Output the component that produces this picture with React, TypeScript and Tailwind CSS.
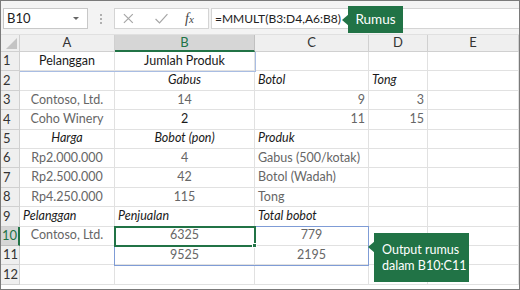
import React from "react";

type Cell = { t?: string; c?: string };
const G = "text-[#666666]";
const K = "text-[#1a1a1a]";

const data: Cell[][] = [
  [{ t: "Pelanggan", c: `justify-center ${K}` }, { t: "Jumlah Produk", c: `justify-center ${K}` }, {}, {}, {}],
  [{}, { t: "Gabus", c: `justify-center italic ${K}` }, { t: "Botol", c: `justify-start italic ${K}` }, { t: "Tong", c: `justify-start italic ${K}` }, {}],
  [{ t: "Contoso, Ltd.", c: `justify-center ${G}` }, { t: "14", c: `justify-center ${G}` }, { t: "9", c: `justify-end ${G}` }, { t: "3", c: `justify-end ${G}` }, {}],
  [{ t: "Coho Winery", c: `justify-center ${G}` }, { t: "2", c: `justify-center ${K}` }, { t: "11", c: `justify-end ${G}` }, { t: "15", c: `justify-end ${G}` }, {}],
  [{ t: "Harga", c: `justify-center italic ${K}` }, { t: "Bobot (pon)", c: `justify-center italic ${K}` }, { t: "Produk", c: `justify-start italic ${K}` }, {}, {}],
  [{ t: "Rp2.000.000", c: `justify-center ${G}` }, { t: "4", c: `justify-center ${G}` }, { t: "Gabus (500/kotak)", c: `justify-start ${G}` }, {}, {}],
  [{ t: "Rp2.500.000", c: `justify-center ${G}` }, { t: "42", c: `justify-center ${G}` }, { t: "Botol (Wadah)", c: `justify-start ${G}` }, {}, {}],
  [{ t: "Rp4.250.000", c: `justify-center ${G}` }, { t: "115", c: `justify-center ${G}` }, { t: "Tong", c: `justify-start ${G}` }, {}, {}],
  [{ t: "Pelanggan", c: `justify-start italic ${K}` }, { t: "Penjualan", c: `justify-start italic ${K}` }, { t: "Total bobot", c: `justify-start italic ${K}` }, {}, {}],
  [{ t: "Contoso, Ltd.", c: `justify-center ${G}` }, { t: "6325", c: `justify-center ${G}` }, { t: "779", c: `justify-center ${G}` }, {}, {}],
  [{}, { t: "9525", c: `justify-center ${G}` }, { t: "2195", c: `justify-center ${G}` }, {}, {}],
  [{}, {}, {}, {}, {}],
];

const cols = ["A", "B", "C", "D", "E"];

export default function App() {
  return (
    <div
      className="relative w-[520px] h-[290px] overflow-hidden bg-white border border-[#7a7a7a] flex flex-col"
      style={{ fontFamily: "Lato, 'Liberation Sans', sans-serif" }}
    >
      {/* formula bar */}
      <div className="h-[34px] shrink-0 bg-[#f3f3f3] border-b border-[#e0e0e0] flex items-start pt-[7px] pl-[2px]">
        <div className="w-[85px] h-[21px] bg-white border border-[#c8c8c8] flex items-center justify-between pl-[3px] pr-[8px]">
          <span className="text-[13px] text-[#222]">B10</span>
          <span className="w-0 h-0 border-l-[3px] border-r-[3px] border-t-[3px] border-l-transparent border-r-transparent border-t-[#666]" />
        </div>
        <div className="w-[26px] h-[21px] flex flex-col items-center justify-center gap-[2px]">
          <span className="w-[2px] h-[2px] bg-[#b0b0b0]" />
          <span className="w-[2px] h-[2px] bg-[#b0b0b0]" />
          <span className="w-[2px] h-[2px] bg-[#b0b0b0]" />
        </div>
        <div className="w-[95px] h-[21px] bg-white border border-[#d4d4d4] flex items-center">
          <svg width="94" height="19" viewBox="0 0 94 19">
            <path d="M9 5 L18 14 M18 5 L9 14" stroke="#a6a6a6" strokeWidth="1.2" fill="none" />
            <path d="M41 10 L45 14 L53 5" stroke="#a6a6a6" strokeWidth="1.2" fill="none" />
          </svg>
        </div>
        <div className="absolute left-[184px] top-[7px] h-[21px] flex items-center">
          <span className="text-[14px] italic text-[#444]" style={{ fontFamily: "'Liberation Serif', serif" }}>f<span className="text-[11px]">x</span></span>
        </div>
        <div className="flex-1 h-[21px] ml-[2px] bg-white border border-[#d4d4d4] border-r-0 flex items-center pl-[3px]">
          <span className="text-[12px] text-[#222] whitespace-nowrap">=MMULT(B3:D4,A6:B8)</span>
        </div>
      </div>

      {/* grid */}
      <div className="grid grid-cols-[19px_95px_140px_114px_59px_91px] grid-rows-[17px_repeat(12,19.4px)] text-[12.5px]">
        <div className="bg-[#efefef] border-r border-b border-[#d0d0d0] relative">
          <span className="absolute right-[2px] bottom-[2px] w-0 h-0 border-b-[11px] border-l-[11px] border-b-[#c4c4c4] border-l-transparent" />
        </div>
        {cols.map((c) =>
          c === "B" ? (
            <div key={c} className="bg-[#d6d6d6] border-r border-[#c0c0c0] border-b-2 border-b-[#217346] flex items-center justify-center text-[13px] text-[#217346]">
              {c}
            </div>
          ) : (
            <div key={c} className="bg-[#efefef] border-r border-b border-[#d0d0d0] flex items-center justify-center text-[13px] text-[#333]">
              {c}
            </div>
          )
        )}
        {data.map((row, ri) => (
          <React.Fragment key={ri}>
            {ri === 9 ? (
              <div className="bg-[#d6d6d6] border-r-2 border-r-[#217346] border-b border-b-[#c0c0c0] flex items-center pl-[1px] text-[13px] text-[#217346]">
                {ri + 1}
              </div>
            ) : (
              <div className="bg-[#efefef] border-r border-b border-[#d0d0d0] flex items-center pl-[2px] text-[13px] text-[#333]">
                {ri + 1}
              </div>
            )}
            {row.map((cell, ci) => (
              <div
                key={ci}
                className={`border-r border-b border-[#e1e1e1] flex items-center px-[3px] whitespace-nowrap overflow-visible ${cell.c ?? ""}`}
              >
                {cell.t}
              </div>
            ))}
          </React.Fragment>
        ))}
      </div>

      {/* row1 blue borders */}
      <div className="absolute left-[19px] top-[51px] w-[236px] h-[20px] border-b border-r border-[#a9bde3] pointer-events-none" />

      {/* range selection B10:C11 */}
      <div className="absolute left-[113px] top-[225px] w-[255px] h-[40px] border border-[#7f9cd6] pointer-events-none" />
      {/* active cell B10 */}
      <div className="absolute left-[113px] top-[225px] w-[142px] h-[21px] border-2 border-[#217346] pointer-events-none" />
      <div className="absolute left-[251px] top-[242px] w-[5px] h-[5px] bg-[#217346] border border-white" />

      {/* callout Rumus */}
      <div className="absolute left-[347px] top-[5px] w-[55px] h-[27px] bg-[#217346] flex items-center justify-center text-white text-[13.5px] whitespace-nowrap">
        Rumus
      </div>
      <div className="absolute left-[341px] top-[13px] w-0 h-0 border-t-[6px] border-b-[6px] border-r-[7px] border-t-transparent border-b-transparent border-r-[#217346]" />

      {/* callout Output */}
      <div className="absolute left-[373px] top-[232px] w-[95px] h-[49px] bg-[#217346] flex flex-col justify-center pl-[8px] text-white text-[12.5px] leading-[16px] whitespace-nowrap">
        <span>Output rumus</span>
        <span>dalam B10:C11</span>
      </div>
      <div className="absolute left-[367px] top-[240px] w-0 h-0 border-t-[6px] border-b-[6px] border-r-[7px] border-t-transparent border-b-transparent border-r-[#217346]" />
    </div>
  );
}
